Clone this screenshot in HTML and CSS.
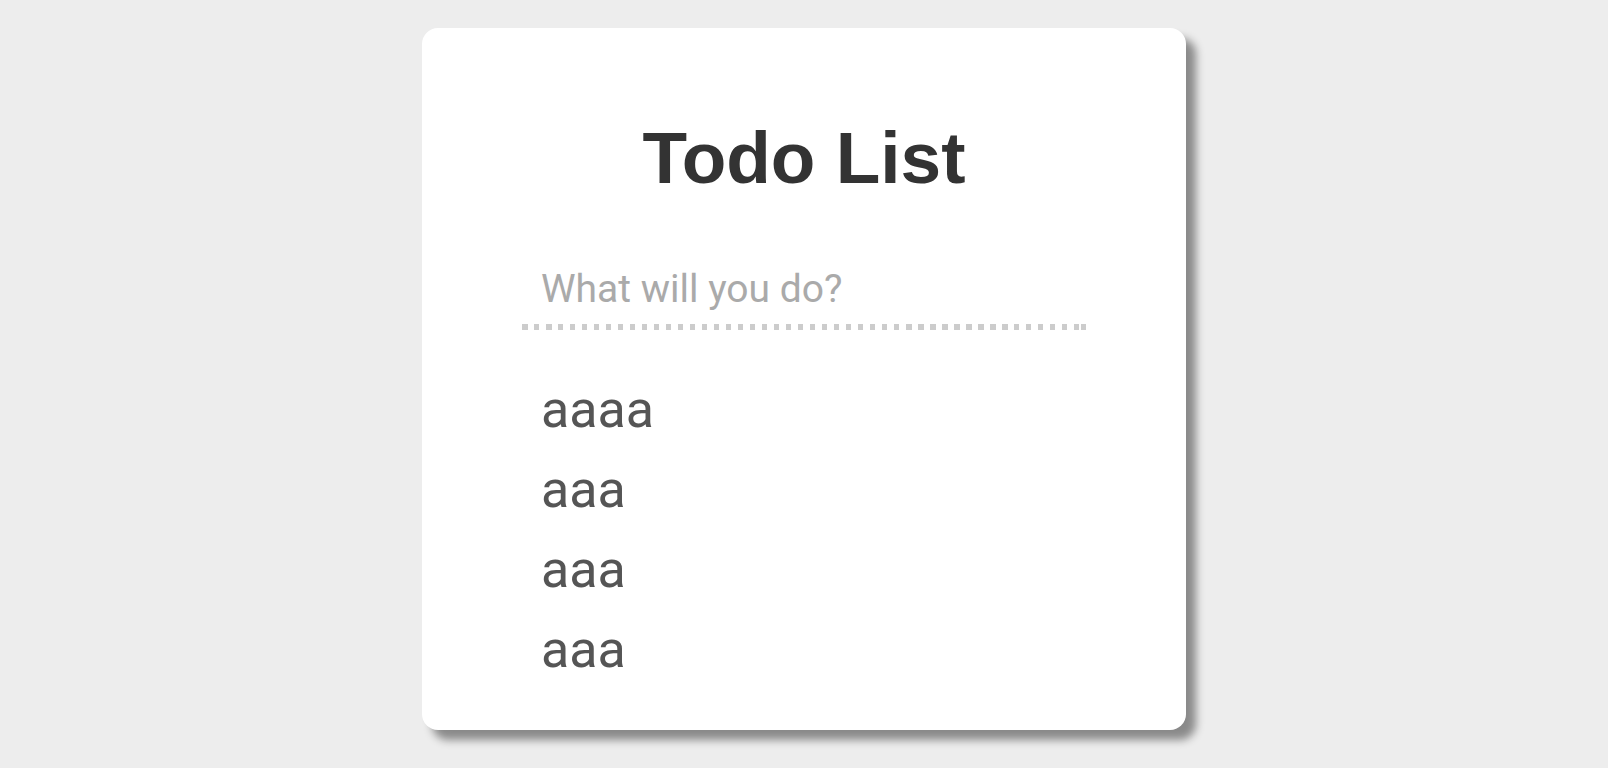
FILE: index.html
```html
<!DOCTYPE html>
<html lang="en">
<head>
<meta charset="utf-8">
<title>Todo List</title>
<link rel="stylesheet" href="styles.css">
</head>
<body>
  <main class="card">
    <h1 class="title">Todo List</h1>
    <input class="new-todo" type="text" placeholder="What will you do?">
    <ul class="todo-list">
      <li class="todo-item">aaaa</li>
      <li class="todo-item">aaa</li>
      <li class="todo-item">aaa</li>
      <li class="todo-item">aaa</li>
    </ul>
  </main>
</body>
</html>
```

FILE: styles.css
```css
html, body {
  margin: 0;
  padding: 0;
}

body {
  background: #ededed;
  font-family: Roboto, "Liberation Sans", sans-serif;
  padding-top: 28px;
  min-height: 768px;
  box-sizing: border-box;
}

.card {
  width: 764px;
  box-sizing: border-box;
  margin: 0 auto;
  background: #fff;
  border-radius: 16px;
  box-shadow: 10px 10px 9px rgba(0, 0, 0, 0.42);
  padding: 94px 100px 40px;
  display: flex;
  flex-direction: column;
}

.title {
  margin: 0;
  font-family: "Liberation Sans", Arial, sans-serif;
  font-weight: 700;
  font-size: 73px;
  line-height: 72px;
  color: #333;
  text-align: center;
}

.new-todo {
  margin: 60px 0 0;
  display: block;
  width: 100%;
  height: 76px;
  box-sizing: border-box;
  border: none;
  outline: none;
  padding: 0 19px 6px;
  font-family: Roboto, sans-serif;
  font-size: 39px;
  color: #555;
  background:
    linear-gradient(#cccccc, #cccccc) right bottom / 5px 6px no-repeat,
    repeating-linear-gradient(to right, #cccccc 0 5.5px, transparent 5.5px 12px) left bottom / 558px 6px no-repeat;
}

.new-todo::placeholder {
  color: #aaa;
}

.todo-list {
  list-style: none;
  margin: 40px 0 0;
  padding: 0 19px;
}

.todo-item {
  font-family: Roboto, sans-serif;
  font-size: 52px;
  line-height: 80px;
  height: 80px;
  color: #555;
}
```
